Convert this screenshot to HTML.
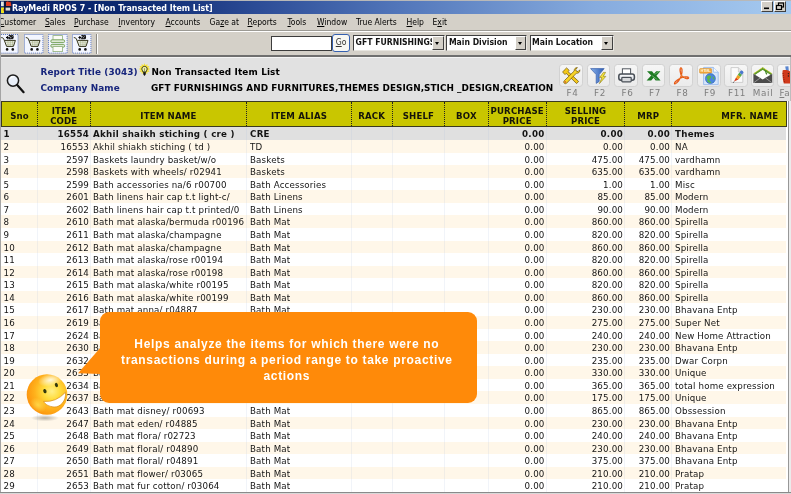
<!DOCTYPE html>
<html><head><meta charset="utf-8"><title>RayMedi RPOS 7 - [Non Transacted Item List]</title>
<style>
html,body{margin:0;padding:0}
body{width:791px;height:494px;overflow:hidden;position:relative;background:#e1e1e1;font-family:"DejaVu Sans","Liberation Sans",sans-serif;font-size:8.7px;color:#141414}
.abs{position:absolute}
#frame-top{left:0;top:0;width:791px;height:1px;background:#b8b8b8}
#title{left:0;top:1px;width:791px;height:13px;background:linear-gradient(90deg,#0a246a 0,#0c286f 17%,#2d4d97 33%,#5175b9 50%,#86abde 75%,#a6caf0 100%)}
#title .t{position:absolute;left:12px;top:.6px;line-height:13px;color:#fff;font-family:"DejaVu Sans Condensed","DejaVu Sans","Liberation Sans",sans-serif;font-weight:700;font-size:8.8px;white-space:pre}
.wb{position:absolute;top:.2px;height:11px;width:11.5px;background:#d4d0c8;border-top:1px solid #fff;border-left:1px solid #fff;border-right:1px solid #404040;border-bottom:1px solid #404040;box-sizing:border-box}
#menu{left:0;top:14px;width:791px;height:16px;background:#d4d0c8}
#menu span{position:absolute;top:2px;line-height:13px;font-family:"DejaVu Sans Condensed","DejaVu Sans","Liberation Sans",sans-serif;font-size:8.5px;white-space:pre;color:#000}
#menu u{text-decoration:underline;text-underline-offset:1px}
#tb{left:0;top:30px;width:791px;height:27px;background:#d4d0c8;border-top:1px solid #9c9a94;box-sizing:border-box}
#tb .hl{position:absolute;left:0;top:0;width:791px;height:1px;background:#fff}
#tb .bl{position:absolute;left:0;top:24px;width:791px;height:2px;background:#6f6f6f}
.ti{position:absolute;top:3px;width:18.5px;height:19px;background:#f4f7ff;border:1px dotted #5d7bc4;box-sizing:border-box}
.inp{position:absolute;background:#fff;border:1px solid #3c3c3c;box-sizing:border-box}
.cmb{position:absolute;top:4.4px;height:15.6px;background:#fff;border:1px solid #404040;border-right-color:#e8e6e0;border-bottom-color:#e8e6e0;box-sizing:border-box;font-family:"DejaVu Sans Condensed","DejaVu Sans","Liberation Sans",sans-serif;font-weight:700;font-size:8.6px;line-height:13.4px;white-space:pre;overflow:hidden;padding-left:1.6px}
.cmb i{position:absolute;right:0;top:0;width:11.5px;height:13.5px;background:#d4d0c8;border-top:1px solid #fff;border-left:1px solid #fff;border-right:1px solid #404040;border-bottom:1px solid #404040;box-sizing:border-box}
.cmb i:after{content:"";position:absolute;left:2.2px;top:4.2px;border-left:2.8px solid transparent;border-right:2.8px solid transparent;border-top:3.2px solid #000}
#hdr{left:0;top:57px;width:791px;height:44px;background:#e1e1e1;border-top:1px solid #f4f4f4;box-sizing:border-box}
.lbl{position:absolute;font-weight:700;color:#17257c;white-space:pre;line-height:11px;font-size:8.9px;letter-spacing:.1px}
.val{position:absolute;font-weight:700;color:#000;white-space:pre;line-height:11px;font-size:8.9px;letter-spacing:.14px}
.fk{position:absolute;top:64px;margin-left:-.7px;width:23.7px;height:23px;border-radius:3.5px;background:linear-gradient(#f6f6f6,#ebebeb);border:1px solid #d2d2d2;box-sizing:border-box}
.fl{position:absolute;top:87.5px;width:40px;text-align:center;color:#7e7e7e;letter-spacing:.55px;font-size:8.8px;line-height:11px;white-space:pre}
#th{left:1px;top:101px;width:785.8px;height:26px;background:#c9c600;border:1px solid #3a3a20;box-sizing:border-box}
.h{position:absolute;top:0;height:24px;padding-top:3.6px;letter-spacing:.15px;display:flex;align-items:center;justify-content:center;text-align:center;font-weight:700;font-size:8.6px;line-height:10.2px;color:#15150a;box-sizing:border-box;border-left:1px dotted #222}
.row{position:absolute;left:1px;width:784.5px;height:12.57px;line-height:14.4px;white-space:pre}
.row.sel{background:#e0e0e0;font-weight:700}
.row.sel .c{letter-spacing:.26px}
.row.ev{background:#fff7e9}
.row.od{background:#fff}
.c{position:absolute;top:0;overflow:hidden;letter-spacing:.15px}
.c0{left:2.5px}
.c1{left:37px;width:51px;text-align:right}
.c2{left:92px;width:153.5px}
.c3{left:249px;width:100px}
.c7{left:488.5px;width:55px;text-align:right}
.c8{left:545.5px;width:76.5px;text-align:right}
.c9{left:624.5px;width:44.5px;text-align:right}
.c10{left:674px;width:112px}
.vl{position:absolute;top:127px;width:1px;height:365px;background:rgba(170,185,220,.16)}
#rb{left:785.5px;top:101px;width:3px;height:393px;background:#fff}
#rb3{left:789px;top:101px;width:2px;height:393px;background:#ebebeb}
#rb2{left:788px;top:101px;width:1px;height:393px;background:#979797}
#rb4{left:789.6px;top:57px;width:1.4px;height:44px;background:#bdbdbd}
#bb{left:0;top:492px;width:791px;height:1px;background:#8a8a8a}
#bb2{left:0;top:493px;width:791px;height:1px;background:#d8d8d8}
#lb{left:0;top:14px;width:1px;height:480px;background:#a4a4a4}
#call{left:100px;top:312px;width:376.8px;height:91px;background:#ff8a09;border-radius:9px}
#call .tx{position:absolute;left:-1.6px;top:25px;width:100%;text-align:center;color:#fff;font-family:"Liberation Sans",sans-serif;font-weight:700;font-size:12px;line-height:15.8px;letter-spacing:.67px;white-space:pre}

#wrap{position:absolute;left:0;top:0;width:791px;height:494px;overflow:hidden;will-change:transform}

</style></head>
<body>
<div id="wrap">
<div id="frame-top" class="abs"></div>
<div id="title" class="abs">
<svg class="abs" style="left:0;top:0" width="12" height="13" viewBox="0 0 12 13"><rect x="4" y="0" width="7.500" height="10.500" fill="#0a0f2a" opacity=".75"/><rect x="1" y=".6" width="2.800" height="4.600" fill="#e4e8e0"/><rect x="1" y="6.400" width="3" height="5.800" fill="#ece21e"/><path d="M6 1 L8 .3 L9 1.200 L10.300 .4 L11 2.500 L11.300 5 H6 Z" fill="#de3c22"/><rect x="5.600" y="6.600" width="4.600" height="3" fill="#dcdcd4"/><rect x="3.200" y="8.500" width="1" height="1" fill="#d02020"/></svg>
<span class="t">RayMedi RPOS 7 - [Non Transacted Item List]</span>
<div class="wb" style="left:761.3px;width:11.8px"><svg width="10" height="8" style="position:absolute;left:0;top:0"><rect x="2" y="5.5" width="5" height="1.6" fill="#000"/></svg></div>
<div class="wb" style="left:773.9px;width:12.2px"><svg width="10" height="8" style="position:absolute;left:0;top:0"><rect x="3.5" y="1" width="5" height="4" fill="none" stroke="#000" stroke-width="1.2"/><rect x="1.5" y="3.5" width="5" height="4" fill="#d4d0c8" stroke="#000" stroke-width="1.2"/></svg></div>
</div>
<div id="menu" class="abs">
<span style="left:-1px"><u>C</u>ustomer</span>
<span style="left:45px"><u>S</u>ales</span>
<span style="left:74px"><u>P</u>urchase</span>
<span style="left:118.5px"><u>I</u>nventory</span>
<span style="left:165.5px"><u>A</u>ccounts</span>
<span style="left:209.5px">Ga<u>z</u>e at</span>
<span style="left:247.5px"><u>R</u>eports</span>
<span style="left:287.5px"><u>T</u>ools</span>
<span style="left:317px"><u>W</u>indow</span>
<span style="left:356px">True Alerts</span>
<span style="left:406.5px"><u>H</u>elp</span>
<span style="left:432.5px">E<u>x</u>it</span>
</div>
<div id="tb" class="abs">
<div class="hl"></div>
<div class="abs" style="left:96px;top:3px;width:1px;height:20px;background:#8c8a84"></div>
<div class="abs" style="left:97px;top:3px;width:1px;height:20px;background:#fff"></div>
<div class="inp" style="left:271px;top:4.6px;width:60.5px;height:15.6px"></div>
<div class="abs" style="left:332.2px;top:3.4px;width:17.8px;height:17.4px;background:#f7f7f3;border:1px solid #3560b0;border-radius:3px;box-sizing:border-box;font-family:'DejaVu Sans Condensed','DejaVu Sans',sans-serif;font-size:8.6px;line-height:15.6px;text-align:center;color:#333"><u>G</u>o</div>
<div class="cmb" style="left:353px;width:91.6px">GFT FURNISHINGS AND<i></i></div>
<div class="cmb" style="left:446.3px;width:81px">Main Division<i></i></div>
<div class="cmb" style="left:529.5px;width:84px">Main Location<i></i></div>
<div class="bl"></div>
</div>
<div id="hdr" class="abs"></div>
<span class="lbl" style="left:40.5px;top:66.6px">Report Title (3043)</span>
<span class="lbl" style="left:40.5px;top:82.7px">Company Name</span>
<span class="val" style="left:151.5px;top:66.6px">Non Transacted Item List</span>
<span class="val" style="left:151px;top:82.7px;letter-spacing:.04px">GFT FURNISHINGS AND FURNITURES,THEMES DESIGN,STICH _DESIGN,CREATION</span>
<!-- toolbar cart icons -->
<svg class="abs" style="left:0;top:33.5px" width="19" height="20" viewBox="0 0 19 20"><rect x="-1" y=".5" width="19" height="18.6" fill="#f3f6ff" stroke="#5f7cc8" stroke-width="1" stroke-dasharray="1 1"/><path d="M1.2 3.6 C3 3.6 3.6 4.2 4.2 6 L6.6 12.4 H13.4 L15.4 6.4 H5" fill="#eceee8" stroke="#33331a" stroke-width="1" stroke-linejoin="round"/><path d="M6 8.2 H14.5 M6.8 10.3 H13.8 M8 6.6 V12 M10.3 6.6 V12 M12.5 6.6 V12" stroke="#8a9a58" stroke-width=".5" fill="none" opacity=".75"/><circle cx="7.1" cy="15.4" r="1.3" fill="#111"/><circle cx="12.8" cy="15.4" r="1.3" fill="#111"/><text x="6" y="4.6" font-family="Liberation Sans,sans-serif" font-size="4.6" font-weight="700" fill="#000" stroke="#000" stroke-width=".4" textLength="7.5">+29</text></svg>
<svg class="abs" style="left:23.5px;top:33.5px" width="20" height="20" viewBox="0 0 20 20"><rect x=".5" y=".5" width="18.4" height="18.6" fill="#f3f6ff" stroke="#5f7cc8" stroke-width="1" stroke-dasharray="1 1"/><path d="M1.8 3.6 C3.6 3.6 4.2 4.2 4.8 6 L7.2 12.4 H14 L16 6.4 H5.6" fill="#eceee8" stroke="#33331a" stroke-width="1" stroke-linejoin="round"/><path d="M6.6 8.2 H15.1 M7.4 10.3 H14.4 M8.6 6.6 V12 M10.9 6.6 V12 M13.1 6.6 V12" stroke="#8a9a58" stroke-width=".5" fill="none" opacity=".75"/><circle cx="7.7" cy="15.4" r="1.3" fill="#111"/><circle cx="13.4" cy="15.4" r="1.3" fill="#111"/></svg>
<svg class="abs" style="left:47.7px;top:33.5px" width="20" height="20" viewBox="0 0 20 20"><rect x=".5" y=".5" width="18.6" height="18.6" fill="#f3f6ff" stroke="#5f7cc8" stroke-width="1" stroke-dasharray="1 1"/><rect x="5" y="1.6" width="9.4" height="5.2" fill="#fbfbf6" stroke="#8fb07a" stroke-width=".8"/><rect x="2.8" y="5.8" width="13.8" height="2.8" rx="1.3" fill="#dfe9d6" stroke="#79a45e" stroke-width="1"/><rect x="2.8" y="10.4" width="13.8" height="2.8" rx="1.3" fill="#dfe9d6" stroke="#79a45e" stroke-width="1"/><rect x="5" y="12.6" width="9.4" height="5" fill="#fbfbf6" stroke="#8fb07a" stroke-width=".8"/></svg>
<svg class="abs" style="left:72.2px;top:33.5px" width="20" height="20" viewBox="0 0 20 20"><rect x=".5" y=".5" width="18.4" height="18.6" fill="#f3f6ff" stroke="#5f7cc8" stroke-width="1" stroke-dasharray="1 1"/><path d="M1.8 3.6 C3.6 3.6 4.2 4.2 4.8 6 L7.2 12.4 H14 L16 6.4 H5.6" fill="#eceee8" stroke="#33331a" stroke-width="1" stroke-linejoin="round"/><path d="M6.6 8.2 H15.1 M7.4 10.3 H14.4 M8.6 6.6 V12 M10.9 6.6 V12 M13.1 6.6 V12" stroke="#8a9a58" stroke-width=".5" fill="none" opacity=".75"/><circle cx="7.7" cy="15.4" r="1.3" fill="#111"/><circle cx="13.4" cy="15.4" r="1.3" fill="#111"/><text x="6.6" y="4.6" font-family="Liberation Sans,sans-serif" font-size="4.6" font-weight="700" fill="#000" stroke="#000" stroke-width=".4" textLength="7.5">+29</text></svg>
<!-- magnifier -->
<svg class="abs" style="left:4px;top:72px" width="24" height="24" viewBox="0 0 24 24"><circle cx="9" cy="8.6" r="5.6" fill="#e9eff9" stroke="#1c1c1c" stroke-width="1.5"/><path d="M6 6.5 A4 4 0 0 1 10 4.8" stroke="#fff" stroke-width="1.2" fill="none"/><path d="M13.2 13 L19.6 20.2" stroke="#111" stroke-width="2.2" stroke-linecap="round"/></svg>
<!-- bulb -->
<svg class="abs" style="left:138px;top:62.5px" width="13" height="15" viewBox="0 0 13 15"><polygon points="6.50,0.20 7.51,2.23 9.40,0.98 9.26,3.24 11.52,3.10 10.27,4.99 12.30,6.00 10.27,7.01 11.52,8.90 9.26,8.76 9.40,11.02 7.51,9.77 6.50,11.80 5.49,9.77 3.60,11.02 3.74,8.76 1.48,8.90 2.73,7.01 0.70,6.00 2.73,4.99 1.48,3.10 3.74,3.24 3.60,0.98 5.49,2.23" fill="#f5e136"/><path d="M6.500 3.400 C4.600 3.400 3.700 4.900 3.900 6.300 C4.100 7.500 5 8 5.100 9 H7.900 C8 8 8.900 7.500 9.100 6.300 C9.300 4.900 8.400 3.400 6.500 3.400 Z" fill="#f2efa8" stroke="#20241a" stroke-width=".9"/><path d="M6.500 5.200 V8.600" stroke="#4a6a30" stroke-width=".6"/><path d="M5 9.200 H8 L7.600 11.400 L6.500 13 L5.400 11.400 Z" fill="#151515"/></svg>

<div class="fk" style="left:560px"></div><span class="fl" style="left:552.5px">F4</span>
<div class="fk" style="left:587.3px"></div><span class="fl" style="left:580px">F2</span>
<div class="fk" style="left:614.8px"></div><span class="fl" style="left:607.5px">F6</span>
<div class="fk" style="left:642.4px"></div><span class="fl" style="left:635px">F7</span>
<div class="fk" style="left:670px"></div><span class="fl" style="left:662.5px">F8</span>
<div class="fk" style="left:697.6px"></div><span class="fl" style="left:690px">F9</span>
<div class="fk" style="left:725px"></div><span class="fl" style="left:717px">F11</span>
<div class="fk" style="left:752px;width:22.5px"></div><span class="fl" style="left:743px;letter-spacing:.7px">Mail</span>
<div class="fk" style="left:777.2px"></div><span class="fl" style="left:779.5px;text-align:left;width:30px"><u>F</u>ax</span>
<!-- F4 tools -->
<svg class="abs" style="left:560px;top:64.5px" width="23" height="22" viewBox="0 0 23 22"><g stroke="#6b5208" stroke-width=".7" stroke-linejoin="round"><path d="M4.2 5.2 L6.6 2.9 L9.2 5.4 L8 6.6 L18.6 16.4 L16.6 18.6 L6.2 8.4 L5 9.6 L2.6 7 Z" fill="#f3c81a"/><path d="M17.4 2.6 C15.6 2.4 14 3.8 14.2 6 L4.4 15.6 C3.4 16.6 3.6 17.6 4.2 18.2 C4.8 18.8 6 19 6.8 18 L16.4 8.2 C18.6 8.6 20.2 6.8 19.8 4.8 L18 6.6 L16.2 6 L15.8 4.4 Z" fill="#f7d326"/></g><circle cx="5.2" cy="17" r=".8" fill="#c33"/></svg>
<!-- F2 filter -->
<svg class="abs" style="left:587.3px;top:64.5px" width="23" height="22" viewBox="0 0 23 22"><defs><linearGradient id="fg" x1="0" y1="0" x2="1" y2="0"><stop offset="0" stop-color="#86b0ea"/><stop offset="1" stop-color="#2f5db4"/></linearGradient></defs><path d="M3.6 3.6 H17.2 L12.2 9.6 V16.4 L9.2 18.4 V9.6 Z" fill="url(#fg)" stroke="#3960aa" stroke-width=".7" stroke-linejoin="round"/><path d="M16.4 7.4 L12.6 12.6 H15 L12.4 18.6 L18.8 11.4 H16.2 L18.6 7.4 Z" fill="#f6e33a" stroke="#8a7a10" stroke-width=".6" stroke-linejoin="round"/></svg>
<!-- F6 printer -->
<svg class="abs" style="left:614.8px;top:64.5px" width="23" height="22" viewBox="0 0 23 22"><rect x="7.400" y="3.800" width="8.200" height="6" fill="#fff" stroke="#50565e" stroke-width="1"/><rect x="3.800" y="9" width="15.600" height="6.200" rx="2.200" fill="#e4e7ec" stroke="#474d55" stroke-width="1.500"/><rect x="6.800" y="12.400" width="9.400" height="4.400" rx=".800" fill="#d8dadd" stroke="#474d55" stroke-width="1.200"/><path d="M5.400 10.800 H17.800" stroke="#fff" stroke-width=".9"/></svg>
<!-- F7 excel -->
<svg class="abs" style="left:642.4px;top:64.5px" width="23" height="22" viewBox="0 0 23 22"><path d="M5 6.2 H10 L12 8.8 L14.2 6.2 H18.4 L14.4 10.8 L18.6 15.4 H13.6 L11.6 12.8 L9.2 15.4 H4.6 L9.2 10.6 Z" fill="#1d7a22"/><path d="M9.6 10.4 L15.4 14.6 M12.6 9.4 L17 6.4" stroke="#8fd08f" stroke-width=".6"/></svg>
<!-- F8 pdf -->
<svg class="abs" style="left:670px;top:64.5px" width="23" height="22" viewBox="0 0 23 22"><path d="M11 3 C12.6 3.4 12 7.4 11.4 10.4 C10.2 14.2 7 18.6 5 18.8 C3.6 18.6 5.2 16 10.6 13 C14.4 11.6 18.4 11.6 18.6 12.8 C18.4 14.4 14 13.4 11.6 10.6 C10 8 9.6 3.2 11 3 Z" fill="none" stroke="#e2461a" stroke-width="1.3" stroke-linejoin="round"/><path d="M11 3 C12.6 3.4 12 7.4 11.4 10.4 C10.2 14.2 7 18.6 5 18.8 C3.6 18.6 5.2 16 10.6 13 C14.4 11.6 18.4 11.6 18.6 12.8 C18.4 14.4 14 13.4 11.6 10.6 C10 8 9.6 3.2 11 3 Z" fill="none" stroke="#f6b21a" stroke-width=".6" stroke-dasharray="1 1.2"/></svg>
<!-- F9 html -->
<svg class="abs" style="left:697.6px;top:64.5px" width="23" height="22" viewBox="0 0 23 22"><path d="M5.6 2.4 H15.4 L20.2 7.2 V19.6 H5.6 Z" fill="#d6e6fb" stroke="#8fb4ea" stroke-width=".8"/><path d="M15.4 2.4 V7.2 H20.2" fill="#f4f9ff" stroke="#8fb4ea" stroke-width=".7"/><rect x="1.6" y="3.6" width="12" height="4.6" rx=".8" fill="#f2a83a" stroke="#d48a20" stroke-width=".5"/><text x="2.6" y="7.3" font-family="Liberation Sans,sans-serif" font-weight="700" font-size="3.9" fill="#fff6d8" textLength="10">HTML</text><circle cx="12.4" cy="13.6" r="5" fill="#4a86dc" stroke="#2d62b8" stroke-width=".6"/><path d="M10 10.6 C12 10 13.6 11 13 12.6 C12.4 13.8 11 13.6 11.4 15.2 C11.8 16.6 13 16.6 13.4 17.8 C11.6 18.4 9.6 17.4 9.2 15.8 C10.2 14.6 9 13.4 8.4 12.4 Z M14.4 11 C15.8 11.8 16.6 13 16.4 14.6 C15.4 14.8 14.6 13.8 14.8 12.6 Z" fill="#58b848"/></svg>
<!-- F11 page brush -->
<svg class="abs" style="left:725px;top:64.5px" width="23" height="22" viewBox="0 0 23 22"><path d="M6 2.600 H13.400 L17.800 7 V17.400 H6 Z" fill="#fbfbfb" stroke="#c4c4c4" stroke-width=".8"/><path d="M13.400 2.600 V7 H17.800" fill="#e6e6e6" stroke="#c4c4c4" stroke-width=".7"/><path d="M9 16.6 L11 12.6 L13.4 14.6 Z" fill="#d83a1a"/><path d="M11 12.600 L12.8 9.800 L15.4 12 L13.4 14.600 Z" fill="#f0a020"/><path d="M12.800 9.800 L14.400 7.600 L17 9.800 L15.400 12 Z" fill="#58a848"/><path d="M14.400 7.600 L16 5.400 C17.600 5.200 18.600 6.400 18.400 7.800 L17 9.800 Z" fill="#4a78d0"/><path d="M9 16.600 L8.200 17.800" stroke="#333" stroke-width=".8"/></svg>
<!-- Mail -->
<svg class="abs" style="left:751.5px;top:64.5px" width="24.8" height="22" viewBox="0 0 23 22" preserveAspectRatio="none"><path d="M1.300 8.800 L9.900 2.200 L18.800 8.800 L17 10 L9.900 5.200 L3 10 Z" fill="#5f9a2c"/><path d="M1.800 8.400 L9.900 2.600 L18.300 8.400" fill="none" stroke="#e8d820" stroke-width=".9" stroke-dasharray="1 1.100"/><path d="M3.400 9.600 L9.900 5 L16.600 9.600 V14 H3.400 Z" fill="#fff"/><path d="M1.300 8.800 L9.900 14.400 L18.800 8.800 V18 H1.300 Z" fill="#4b4b4b"/><path d="M1.800 17.600 L7.600 12.900 M18.300 17.600 L12.400 12.900" stroke="#a4a4a4" stroke-width=".8"/><path d="M12 5.600 C13.600 6.600 12.200 8.400 14 9.200" stroke="#3f8426" stroke-width="1.100" fill="none"/></svg>
<!-- Fax -->
<svg class="abs" style="left:779.8px;top:64.500px" width="12" height="22" viewBox="0 0 12 22"><path d="M5.200 1.600 L8.400 1.200 L8.800 6 L6.200 6.400 Z" fill="#5a86d0"/><path d="M2.600 5.400 C4 4.600 8 5 10 6.200 V18.600 H3.800 C2.600 14 2.200 9 2.600 5.400 Z" fill="#d03a1c"/><path d="M3 8 L4.600 18" stroke="#801808" stroke-width=".8" stroke-dasharray="1 1"/><circle cx="8.400" cy="8.600" r=".7" fill="#222"/><circle cx="8.400" cy="11" r=".7" fill="#222"/></svg>

<div id="rb" class="abs"></div>
<div id="th" class="abs">
<div class="h" style="left:0.0px;width:35.0px;border-left:none">Sno</div>
<div class="h" style="left:35.0px;width:52.5px">ITEM<br>CODE</div>
<div class="h" style="left:87.5px;width:156.8px">ITEM NAME</div>
<div class="h" style="left:244.3px;width:104.5px">ITEM ALIAS</div>
<div class="h" style="left:348.8px;width:40.7px">RACK</div>
<div class="h" style="left:389.5px;width:52.8px">SHELF</div>
<div class="h" style="left:442.3px;width:43.2px">BOX</div>
<div class="h" style="left:485.5px;width:58.4px">PURCHASE<br>PRICE</div>
<div class="h" style="left:543.9px;width:78.3px">SELLING<br>PRICE</div>
<div class="h" style="left:622.2px;width:47.2px">MRP</div>
<div class="h" style="left:669.4px;width:114.4px;justify-content:flex-end;padding-right:7.5px">MFR. NAME</div>
</div>
<div class="row sel" style="top:127.40px"><span class="c c0">1</span><span class="c c1">16554</span><span class="c c2">Akhil shaikh stiching ( cre )</span><span class="c c3">CRE</span><span class="c c7">0.00</span><span class="c c8">0.00</span><span class="c c9">0.00</span><span class="c c10">Themes</span></div>
<div class="row ev" style="top:139.97px"><span class="c c0">2</span><span class="c c1">16553</span><span class="c c2">Akhil shiakh stiching ( td )</span><span class="c c3">TD</span><span class="c c7">0.00</span><span class="c c8">0.00</span><span class="c c9">0.00</span><span class="c c10">NA</span></div>
<div class="row od" style="top:152.54px"><span class="c c0">3</span><span class="c c1">2597</span><span class="c c2">Baskets laundry basket/w/o</span><span class="c c3">Baskets</span><span class="c c7">0.00</span><span class="c c8">475.00</span><span class="c c9">475.00</span><span class="c c10">vardhamn</span></div>
<div class="row ev" style="top:165.11px"><span class="c c0">4</span><span class="c c1">2598</span><span class="c c2">Baskets with wheels/ r02941</span><span class="c c3">Baskets</span><span class="c c7">0.00</span><span class="c c8">635.00</span><span class="c c9">635.00</span><span class="c c10">vardhamn</span></div>
<div class="row od" style="top:177.68px"><span class="c c0">5</span><span class="c c1">2599</span><span class="c c2">Bath accessories na/6 r00700</span><span class="c c3">Bath Accessories</span><span class="c c7">0.00</span><span class="c c8">1.00</span><span class="c c9">1.00</span><span class="c c10">Misc</span></div>
<div class="row ev" style="top:190.25px"><span class="c c0">6</span><span class="c c1">2601</span><span class="c c2">Bath linens hair cap t.t light-c/</span><span class="c c3">Bath Linens</span><span class="c c7">0.00</span><span class="c c8">85.00</span><span class="c c9">85.00</span><span class="c c10">Modern</span></div>
<div class="row od" style="top:202.82px"><span class="c c0">7</span><span class="c c1">2602</span><span class="c c2">Bath linens hair cap t.t printed/0</span><span class="c c3">Bath Linens</span><span class="c c7">0.00</span><span class="c c8">90.00</span><span class="c c9">90.00</span><span class="c c10">Modern</span></div>
<div class="row ev" style="top:215.39px"><span class="c c0">8</span><span class="c c1">2610</span><span class="c c2">Bath mat alaska/bermuda r00196</span><span class="c c3">Bath Mat</span><span class="c c7">0.00</span><span class="c c8">860.00</span><span class="c c9">860.00</span><span class="c c10">Spirella</span></div>
<div class="row od" style="top:227.96px"><span class="c c0">9</span><span class="c c1">2611</span><span class="c c2">Bath mat alaska/champagne</span><span class="c c3">Bath Mat</span><span class="c c7">0.00</span><span class="c c8">820.00</span><span class="c c9">820.00</span><span class="c c10">Spirella</span></div>
<div class="row ev" style="top:240.53px"><span class="c c0">10</span><span class="c c1">2612</span><span class="c c2">Bath mat alaska/champagne</span><span class="c c3">Bath Mat</span><span class="c c7">0.00</span><span class="c c8">860.00</span><span class="c c9">860.00</span><span class="c c10">Spirella</span></div>
<div class="row od" style="top:253.10px"><span class="c c0">11</span><span class="c c1">2613</span><span class="c c2">Bath mat alaska/rose r00194</span><span class="c c3">Bath Mat</span><span class="c c7">0.00</span><span class="c c8">820.00</span><span class="c c9">820.00</span><span class="c c10">Spirella</span></div>
<div class="row ev" style="top:265.67px"><span class="c c0">12</span><span class="c c1">2614</span><span class="c c2">Bath mat alaska/rose r00198</span><span class="c c3">Bath Mat</span><span class="c c7">0.00</span><span class="c c8">860.00</span><span class="c c9">860.00</span><span class="c c10">Spirella</span></div>
<div class="row od" style="top:278.24px"><span class="c c0">13</span><span class="c c1">2615</span><span class="c c2">Bath mat alaska/white r00195</span><span class="c c3">Bath Mat</span><span class="c c7">0.00</span><span class="c c8">820.00</span><span class="c c9">820.00</span><span class="c c10">Spirella</span></div>
<div class="row ev" style="top:290.81px"><span class="c c0">14</span><span class="c c1">2616</span><span class="c c2">Bath mat alaska/white r00199</span><span class="c c3">Bath Mat</span><span class="c c7">0.00</span><span class="c c8">860.00</span><span class="c c9">860.00</span><span class="c c10">Spirella</span></div>
<div class="row od" style="top:303.38px"><span class="c c0">15</span><span class="c c1">2617</span><span class="c c2">Bath mat anna/ r04887</span><span class="c c3">Bath Mat</span><span class="c c7">0.00</span><span class="c c8">230.00</span><span class="c c9">230.00</span><span class="c c10">Bhavana Entp</span></div>
<div class="row ev" style="top:315.95px"><span class="c c0">16</span><span class="c c1">2619</span><span class="c c2">Bath mat aqua/ r04888</span><span class="c c3">Bath Mat</span><span class="c c7">0.00</span><span class="c c8">275.00</span><span class="c c9">275.00</span><span class="c c10">Super Net</span></div>
<div class="row od" style="top:328.52px"><span class="c c0">17</span><span class="c c1">2624</span><span class="c c2">Bath mat bamboo/ r04889</span><span class="c c3">Bath Mat</span><span class="c c7">0.00</span><span class="c c8">240.00</span><span class="c c9">240.00</span><span class="c c10">New Home Attraction</span></div>
<div class="row ev" style="top:341.09px"><span class="c c0">18</span><span class="c c1">2630</span><span class="c c2">Bath mat blossom/ r04880</span><span class="c c3">Bath Mat</span><span class="c c7">0.00</span><span class="c c8">230.00</span><span class="c c9">230.00</span><span class="c c10">Bhavana Entp</span></div>
<div class="row od" style="top:353.66px"><span class="c c0">19</span><span class="c c1">2632</span><span class="c c2">Bath mat chenille/ r04881</span><span class="c c3">Bath Mat</span><span class="c c7">0.00</span><span class="c c8">235.00</span><span class="c c9">235.00</span><span class="c c10">Dwar Corpn</span></div>
<div class="row ev" style="top:366.23px"><span class="c c0">20</span><span class="c c1">2633</span><span class="c c2">Bath mat cotton/ r04882</span><span class="c c3">Bath Mat</span><span class="c c7">0.00</span><span class="c c8">330.00</span><span class="c c9">330.00</span><span class="c c10">Unique</span></div>
<div class="row od" style="top:378.80px"><span class="c c0">21</span><span class="c c1">2634</span><span class="c c2">Bath mat daisy/ r04883</span><span class="c c3">Bath Mat</span><span class="c c7">0.00</span><span class="c c8">365.00</span><span class="c c9">365.00</span><span class="c c10">total home expression</span></div>
<div class="row ev" style="top:391.37px"><span class="c c0">22</span><span class="c c1">2637</span><span class="c c2">Bath mat designer/ r04884</span><span class="c c3">Bath Mat</span><span class="c c7">0.00</span><span class="c c8">175.00</span><span class="c c9">175.00</span><span class="c c10">Unique</span></div>
<div class="row od" style="top:403.94px"><span class="c c0">23</span><span class="c c1">2643</span><span class="c c2">Bath mat disney/ r00693</span><span class="c c3">Bath Mat</span><span class="c c7">0.00</span><span class="c c8">865.00</span><span class="c c9">865.00</span><span class="c c10">Obssession</span></div>
<div class="row ev" style="top:416.51px"><span class="c c0">24</span><span class="c c1">2647</span><span class="c c2">Bath mat eden/ r04885</span><span class="c c3">Bath Mat</span><span class="c c7">0.00</span><span class="c c8">230.00</span><span class="c c9">230.00</span><span class="c c10">Bhavana Entp</span></div>
<div class="row od" style="top:429.08px"><span class="c c0">25</span><span class="c c1">2648</span><span class="c c2">Bath mat flora/ r02723</span><span class="c c3">Bath Mat</span><span class="c c7">0.00</span><span class="c c8">240.00</span><span class="c c9">240.00</span><span class="c c10">Bhavana Entp</span></div>
<div class="row ev" style="top:441.65px"><span class="c c0">26</span><span class="c c1">2649</span><span class="c c2">Bath mat floral/ r04890</span><span class="c c3">Bath Mat</span><span class="c c7">0.00</span><span class="c c8">230.00</span><span class="c c9">230.00</span><span class="c c10">Bhavana Entp</span></div>
<div class="row od" style="top:454.22px"><span class="c c0">27</span><span class="c c1">2650</span><span class="c c2">Bath mat floral/ r04891</span><span class="c c3">Bath Mat</span><span class="c c7">0.00</span><span class="c c8">375.00</span><span class="c c9">375.00</span><span class="c c10">Bhavana Entp</span></div>
<div class="row ev" style="top:466.79px"><span class="c c0">28</span><span class="c c1">2651</span><span class="c c2">Bath mat flower/ r03065</span><span class="c c3">Bath Mat</span><span class="c c7">0.00</span><span class="c c8">210.00</span><span class="c c9">210.00</span><span class="c c10">Pratap</span></div>
<div class="row od" style="top:479.36px"><span class="c c0">29</span><span class="c c1">2653</span><span class="c c2">Bath mat fur cotton/ r03064</span><span class="c c3">Bath Mat</span><span class="c c7">0.00</span><span class="c c8">210.00</span><span class="c c9">210.00</span><span class="c c10">Pratap</span></div>
<div class="vl" style="left:37.0px"></div>
<div class="vl" style="left:89.5px"></div>
<div class="vl" style="left:246.3px"></div>
<div class="vl" style="left:350.8px"></div>
<div class="vl" style="left:391.5px"></div>
<div class="vl" style="left:444.3px"></div>
<div class="vl" style="left:487.5px"></div>
<div class="vl" style="left:545.9px"></div>
<div class="vl" style="left:624.2px"></div>
<div class="vl" style="left:671.4px"></div>
<div id="lb" class="abs"></div>
<div id="rb2" class="abs"></div><div id="rb3" class="abs"></div><div id="rb4" class="abs"></div>
<div id="bb" class="abs"></div>
<div id="bb2" class="abs"></div>
<svg class="abs" style="left:20px;top:365px" width="60" height="62" viewBox="0 0 60 62">
<defs>
<radialGradient id="sg" cx=".62" cy=".42" r=".68"><stop offset="0" stop-color="#fff08a"/><stop offset=".3" stop-color="#ffdc3c"/><stop offset=".62" stop-color="#ffb21c"/><stop offset="1" stop-color="#fb8d0a"/></radialGradient>
<radialGradient id="sh" cx=".5" cy=".5" r=".5"><stop offset="0" stop-color="#8a8478" stop-opacity=".6"/><stop offset="1" stop-color="#8a8478" stop-opacity="0"/></radialGradient>
<radialGradient id="hl" cx=".5" cy=".5" r=".5"><stop offset="0" stop-color="#fffbe8" stop-opacity=".95"/><stop offset="1" stop-color="#fffbe8" stop-opacity="0"/></radialGradient>
<radialGradient id="yl" cx=".5" cy=".5" r=".5"><stop offset="0" stop-color="#ffe85a" stop-opacity=".7"/><stop offset="1" stop-color="#ffe85a" stop-opacity="0"/></radialGradient>
</defs>
<ellipse cx="25" cy="53" rx="14" ry="3.4" fill="url(#sh)"/>
<circle cx="27" cy="29.5" r="20.300" fill="url(#sg)"/>
<ellipse cx="30.400" cy="15" rx="12.500" ry="6.500" fill="url(#hl)" transform="rotate(-10 30.400 15)"/>
<ellipse cx="18" cy="40" rx="9" ry="6.500" fill="url(#yl)" transform="rotate(35 18 40)"/>
<ellipse cx="24.900" cy="26.100" rx="1.600" ry="2.200" fill="#33380e" transform="rotate(-20 24.900 26.100)"/>
<ellipse cx="36.400" cy="20" rx="1.500" ry="2.200" fill="#33380e" transform="rotate(-20 36.400 20)"/>
<path d="M23.700 36.400 Q36 37.500 45.500 27.300 C46.500 36 40 42.500 34 42 C29 41.500 25 39.500 23.700 36.400 Z" fill="#fff" stroke="#d98a14" stroke-width=".7"/>
</svg>

<svg class="abs" style="left:76px;top:340px" width="30" height="40" viewBox="0 0 30 40"><polygon points="25,7 2,33.3 25,34" fill="#ff8a09"/></svg>
<div id="call" class="abs"><div class="tx">Helps analyze the items for which there were no
transactions during a period range to take proactive
actions</div></div>
</div>
</body></html>
